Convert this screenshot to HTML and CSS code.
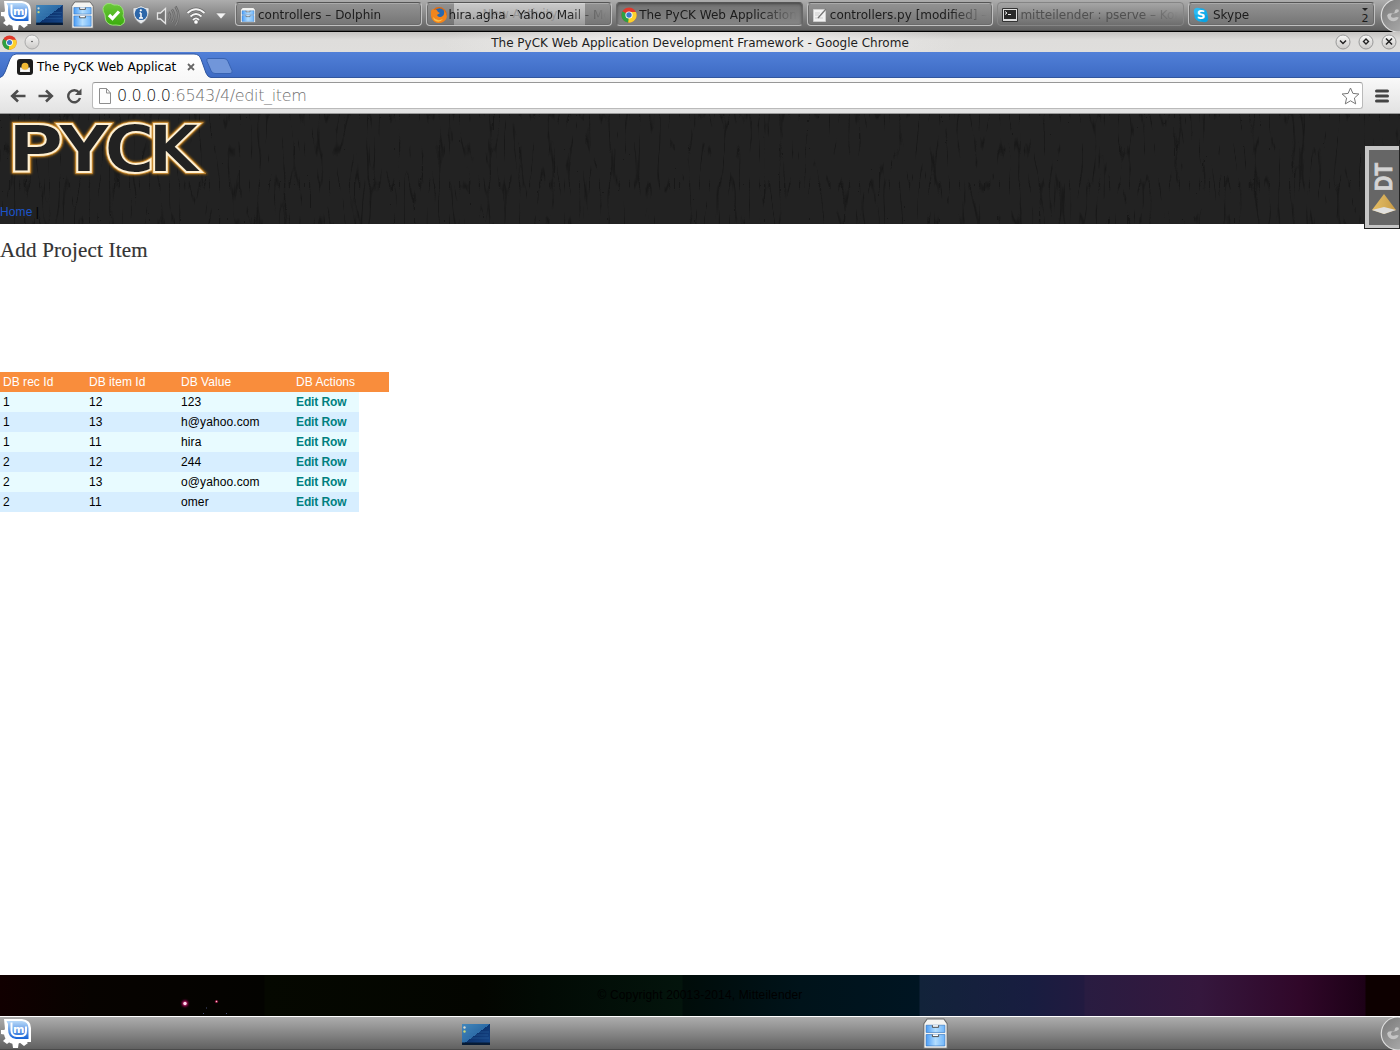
FILE: index.html
```html
<!DOCTYPE html>
<html lang="en">
<head>
<meta charset="utf-8">
<title>The PyCK Web Application Development Framework</title>
<link rel="stylesheet" href="styles.css">
</head>
<body>
<svg class="defs" width="0" height="0">
  <defs>
    <linearGradient id="blue" x1="0" y1="0" x2="0" y2="1"><stop offset="0" stop-color="#b9daf9"/><stop offset="1" stop-color="#1562d6"/></linearGradient>
    <linearGradient id="drawer" x1="0" y1="0" x2="1" y2="0"><stop offset="0" stop-color="#4a9cf6"/><stop offset=".5" stop-color="#b4defe"/><stop offset="1" stop-color="#6fb5fb"/></linearGradient>
    <linearGradient id="screen" x1="0" y1="0" x2="1" y2="1"><stop offset="0" stop-color="#4287bc"/><stop offset=".5" stop-color="#2c6ba6"/><stop offset=".5" stop-color="#0d3470"/><stop offset="1" stop-color="#17488a"/></linearGradient>
    <linearGradient id="green" x1="0" y1="0" x2="0" y2="1"><stop offset="0" stop-color="#6cc83b"/><stop offset="1" stop-color="#3aab0c"/></linearGradient>
    <linearGradient id="gold" x1="0" y1="0" x2="1" y2="0"><stop offset="0" stop-color="#e5bd63"/><stop offset=".5" stop-color="#d6ae58"/><stop offset="1" stop-color="#c99a43"/></linearGradient>
    <linearGradient id="knob" x1="0" y1="0" x2="1" y2="1"><stop offset="0" stop-color="#777"/><stop offset="1" stop-color="#b5b5b5"/></linearGradient>
    <linearGradient id="btn" x1="0" y1="0" x2="0" y2="1"><stop offset="0" stop-color="#f8f8f7"/><stop offset="1" stop-color="#cbc9c7"/></linearGradient>
    <linearGradient id="tabfill" x1="0" y1="0" x2="0" y2="1"><stop offset="0" stop-color="#fff"/><stop offset="1" stop-color="#f8f8f8"/></linearGradient>
    <filter id="glow" x="-10%" y="-20%" width="120%" height="140%"><feGaussianBlur stdDeviation="1.1"/></filter>
    <filter id="halo" x="-100%" y="-100%" width="300%" height="300%"><feGaussianBlur stdDeviation="1.1"/></filter>
    <filter id="grain" x="0" y="0" width="100%" height="100%" color-interpolation-filters="sRGB">
      <feTurbulence type="turbulence" baseFrequency=".1 .014" numOctaves="2" seed="7"/>
      <feColorMatrix values="0 0 0 0 0  0 0 0 0 0  0 0 0 0 0  -10 0 0 0 1.1"/>
    </filter>
    <symbol id="mint" viewBox="0 0 32 32">
      <g fill="#fff"><circle cx="15" cy="16" r="11"/><path d="M12 24h7l-1 7h-5zM1 13h6v5l-6-1zM3 24l5-5 4 4-5 4zM23 22l5 4-4 3-5-4zM4 2h18q9 1 9 9v14H15Q5 23 5 12z"/></g>
      <path d="M6.500 4H22q6.500 1 6.500 7v11H16Q8 21 8 12V7z" fill="url(#blue)"/>
      <path d="M11.500 5.500v8q0 5.500 5.500 5.500h4q5 0 5-5V9.500" fill="none" stroke="#fff" stroke-width="2"/>
      <text x="13" y="16" class="mint-m">m</text>
    </symbol>
    <symbol id="desktop" viewBox="0 0 28 21">
      <rect width="28" height="21" fill="url(#screen)"/><path d="M5 8h22M4 11h22M2 14h25" stroke="#3978b2" stroke-width=".6" opacity=".6"/>
      <rect y="18.500" width="28" height="2.500" fill="#071b35"/><circle cx="2.500" cy="3.500" r="1.200" fill="#d8d8d0"/><circle cx="2.500" cy="7.500" r="1.200" fill="#c9d77a"/>
    </symbol>
    <symbol id="cabinet" viewBox="0 0 24 30" preserveAspectRatio="none">
      <path d="M.800 5.500 4 1h16l3.200 4.500v23.700H.800z" fill="#f4f4f2" stroke="#696969"/>
      <path d="M3 7h18v7H3zM3 16h18v11H3z" fill="url(#drawer)" stroke="#3173bd" stroke-width=".6"/>
      <path d="M9 7v2h6V7M9 16v2h6v-2" fill="#fff" stroke="#444" stroke-width=".9"/>
    </symbol>
    <symbol id="chrome" viewBox="0 0 16 16">
      <circle cx="8" cy="8" r="7.600" fill="#e0392c"/><path d="M8 8 1.400 4.200A7.600 7.600 0 0 0 7.200 15.600L10.800 9z" fill="#2ea043"/><path d="M8 8l-.8 7.600A7.600 7.600 0 0 0 15 5H8z" fill="#fcd02c"/>
      <circle cx="8" cy="8" r="3.600" fill="#fff"/><circle cx="8" cy="8" r="2.700" fill="#3c78c8"/>
    </symbol>
    <symbol id="cashew" viewBox="0 0 20 34">
      <circle cx="18" cy="17" r="17" fill="url(#knob)" stroke="#dedede" stroke-width="1.2"/>
      <path d="M19 11q-3-1-4 1 .5 2-2 3-5-1-6 2 1 6 7 6 4-1 5-4-2-1-4 0-3 1-4-1 0-3 3-3 3 0 5-2" fill="#c4c4c4"/>
    </symbol>
  </defs>
</svg>

<header class="panel">
  <div class="tray">
    <svg class="i-mint"><use href="#mint"/></svg>
    <svg class="i-desk"><use href="#desktop"/></svg>
    <svg class="i-cab"><use href="#cabinet"/></svg>
    <svg class="i-skype" viewBox="0 0 24 24"><path d="M5 .7Q9-.3 12 2q7-1 9 5 1 4 0 6 3 4 1 7-3 4-8 2-7 1-10-4-1-3-1-6Q-2 4 5 .7z" fill="url(#green)" stroke="#9be07b"/><path d="M7 12l3.500 3.500 6.500-7" fill="none" stroke="#fff" stroke-width="3.200"/></svg>
    <svg class="i-shield" viewBox="0 0 18 20"><path d="M9 .7q4 2.300 8 2.300 1 11-8 16Q0 14 1 3q4 0 8-2.300z" fill="#e6e9ec" stroke="#888" stroke-width=".7"/><circle cx="9" cy="8.800" r="6.300" fill="#2d67a9"/><path d="M9 8v5M7.500 8H9M7 13h4" stroke="#fff" stroke-width="1.500"/><circle cx="8.800" cy="5.300" r="1.100" fill="#fff"/></svg>
    <svg class="i-sound" viewBox="0 0 26 24"><path d="M1.500 9h3l5-4.500v15l-5-4.500h-3z" fill="#777" stroke="#e4e4e4" stroke-width="1.300"/><path d="M12.500 8q3 4 0 8M16 5.500q4.500 6.500 0 13M19.500 2.500q6 9.500 0 19" fill="none" stroke="#686868" stroke-width="2.400"/><path d="M12.500 8q3 4 0 8M16 5.500q4.500 6.500 0 13M19.500 2.500q6 9.500 0 19" fill="none" stroke="#8c8c8c" stroke-width="1"/></svg>
    <svg class="i-wifi" viewBox="0 0 20 18"><g fill="none" stroke="#666" stroke-width="3.200"><path d="M1.500 6Q10-1.500 18.500 6M4.500 9.500q5.500-5 11 0M7 13q3-3 6 0"/></g><g fill="none" stroke="#f4f4f4" stroke-width="1.900"><path d="M1.500 6Q10-1.500 18.500 6M4.500 9.500q5.500-5 11 0M7 13q3-3 6 0"/></g><circle cx="10" cy="15" r="2.200" fill="#fff" stroke="#555" stroke-width=".6"/></svg>
    <svg class="i-arrow" viewBox="0 0 12 8"><path d="M.7 1h10.600L6 7z" fill="#f4f4f4" stroke="#777" stroke-width=".6"/></svg>
  </div>
  <nav class="tasks">
    <div class="task"><svg class="ti"><use href="#cabinet"/></svg><span>controllers – Dolphin</span></div>
    <div class="task fox"><svg class="ti" viewBox="0 0 16 16"><circle cx="8" cy="8" r="7.900" fill="#e26a0c"/><circle cx="8.500" cy="6.500" r="5.200" fill="#2868b0"/><path d="M1 3Q2 1 3 3q3-1 4 2l2 1-3 2q1 3 5 1.500 3-1 2-6.500 6 8-1 12-7 3-11-3-2-5-.500-9z" fill="#f2851c"/><path d="M2 10q4 5 10 2-4 5-9 1z" fill="#fbc04a"/></svg><span>hira.agha - Yahoo Mail - Mozilla</span><em>New Activity</em></div>
    <div class="task active"><svg class="ti"><use href="#chrome"/></svg><span>The PyCK Web Application D</span></div>
    <div class="task"><svg class="ti" viewBox="0 0 16 16"><path d="M1.500 2.500h12v12h-12z" fill="#f2f2f2" stroke="#ccc"/><path d="M3 6h5M3 8h4M3 11h8" stroke="#ccc"/><path d="M6 11 14 2" stroke="#777" stroke-width="1.300"/></svg><span>controllers.py [modified] – Kate</span></div>
    <div class="task dim"><svg class="ti" viewBox="0 0 16 16"><path d="M.5 1.500h15v13H.5z" fill="#ddd" stroke="#333"/><path d="M2 3h12v9H2z" fill="#292929"/><path d="M3 4.500l2 1.500-2 1.500M6 7.500h3" fill="none" stroke="#eee"/></svg><span>mitteilender : pserve – Konsole</span></div>
    <div class="task skype"><svg class="ti" viewBox="0 0 16 16"><circle cx="8" cy="8" r="6.700" fill="#12aeed"/><circle cx="4.500" cy="4.500" r="3.700" fill="#2cb9f2"/><circle cx="11.500" cy="11.500" r="3.700" fill="#0ba3e2"/><text x="8" y="12" class="sk-s">S</text></svg><span>Skype</span><b class="count"><svg width="6" height="3" viewBox="0 0 6 3"><path d="M0 0h6L3 3z" fill="#222"/></svg>2</b></div>
  </nav>
  <svg class="i-cashew"><use href="#cashew"/></svg>
</header>

<div class="titlebar">
  <div class="tl"><svg width="15" height="15"><use href="#chrome"/></svg><svg width="16" height="16" viewBox="0 0 16 16"><circle cx="8" cy="8" r="7" fill="url(#btn)" stroke="#aaa"/><circle cx="8" cy="7.500" r=".8" fill="#444"/></svg></div>
  <span class="title">The PyCK Web Application Development Framework - Google Chrome</span>
  <div class="tr">
    <svg width="16" height="16" viewBox="0 0 16 16"><circle cx="8" cy="8" r="7" fill="url(#btn)" stroke="#999"/><path d="M5 6.500l3 3 3-3" fill="none" stroke="#222" stroke-width="1.500"/></svg>
    <svg width="16" height="16" viewBox="0 0 16 16"><circle cx="8" cy="8" r="7" fill="url(#btn)" stroke="#999"/><path d="M8 5l2.500 2.500L8 10 5.500 7.500z" fill="none" stroke="#222" stroke-width="1.400"/></svg>
    <svg width="16" height="16" viewBox="0 0 16 16"><circle cx="8" cy="8" r="7" fill="url(#btn)" stroke="#999"/><path d="M5 4.500l6 6M11 4.500l-6 6" stroke="#222" stroke-width="1.500"/></svg>
  </div>
</div>

<div class="tabstrip">
  <div class="tab">
    <svg class="tabshape" viewBox="0 0 236 26"><path d="M0 25.500Q3 25 5 20l5-13q2-5 6-5h178q5 0 7 5l5 14q2 4.500 5 4.500v1H0z" fill="url(#tabfill)"/><path d="M0 25.500Q3 25 5 20l5-13q2-5 6-5h178q5 0 7 5l5 14q2 4.500 5 4.500" fill="none" stroke="#2e559f"/><path d="M208 6.500h16q3 0 4 3l4 9q1 3-2 3h-15q-3 0-4-3l-4-9q-1-3 1-3z" fill="#7196da" stroke="#3863b3"/></svg>
    <div class="tabrow">
      <svg width="16" height="16" viewBox="0 0 16 16"><rect width="16" height="16" rx="3" fill="#1d1d1d"/><path d="M3 8.500h10v4.500H3z" fill="#e5e5e5"/><circle cx="8" cy="7.200" r="3.500" fill="#f0b934"/><path d="M4 10.500q4 2 8 0v2H4z" fill="#fff"/></svg>
      <span>The PyCK Web Applicat</span>
      <svg class="close" width="8" height="8" viewBox="0 0 8 8"><path d="M1 1l6 6M7 1 1 7" stroke="#666" stroke-width="1.800"/></svg>
    </div>
  </div>
</div>

<div class="toolbar">
  <svg width="16" height="16" viewBox="0 0 16 16"><path d="M15.500 8H3M8 2.500 2.200 8 8 13.500" fill="none" stroke="#4d4d4d" stroke-width="2.600"/></svg>
  <svg width="16" height="16" viewBox="0 0 16 16"><path d="M.5 8H13M8 2.500 13.800 8 8 13.500" fill="none" stroke="#4d4d4d" stroke-width="2.600"/></svg>
  <svg width="16" height="16" viewBox="0 0 16 16"><path d="M13 4.500A6 6 0 1 0 14 10" fill="none" stroke="#4d4d4d" stroke-width="2.400"/><path d="M15.500.500V7H9z" fill="#4d4d4d"/></svg>
  <div class="omnibox">
    <svg width="12" height="16" viewBox="0 0 12 16"><path d="M.500.500h7l4 4.500v10.500H.500zM7.500.500V5h4" fill="#fdfdfd" stroke="#8d8d8d"/></svg>
    <span class="url"><i>0.0.0.0</i>:6543/4/edit_item</span>
    <svg class="star" width="19" height="18" viewBox="0 0 19 18"><path d="M9.500 1l2.400 5.400 6 .6-4.500 4 1.300 5.900-5.200-3.100-5.200 3.100L5.600 11 1.100 7l6-.6z" fill="#fff" stroke="#777" stroke-linejoin="round"/></svg>
  </div>
  <svg class="menu" width="14" height="14" viewBox="0 0 14 14"><path d="M1.500 2h11M1.500 7h11M1.500 12h11" stroke="#444" stroke-width="3" stroke-linecap="round"/></svg>
</div>

<section class="banner">
  <svg class="bark"><rect width="1400" height="110" fill="#222"/><rect width="1400" height="110" filter="url(#grain)" opacity=".27"/></svg>
  <svg class="logo" width="210" height="70" viewBox="0 0 210 70">
    <defs>
      <g id="word" class="logo-text">
        <text x="7" y="57.500" textLength="57" lengthAdjust="spacingAndGlyphs">P</text>
        <text x="58" y="57.500" textLength="52" lengthAdjust="spacingAndGlyphs">Y</text>
        <text x="104" y="57.500" textLength="51" lengthAdjust="spacingAndGlyphs">C</text>
        <text x="148" y="57.500" textLength="52" lengthAdjust="spacingAndGlyphs">K</text>
      </g>
    </defs>
    <use href="#word" stroke="#b87416" stroke-width="4.500" filter="url(#glow)"/>
    <use href="#word" stroke="#cf943c" stroke-width="3.400"/>
    <use href="#word" stroke="#fff0d2" stroke-width="1.800"/>
  </svg>
  <div class="crumb"><a>Home</a> |</div>
  <svg class="dt" width="36" height="84" viewBox="0 0 36 84"><rect x=".5" y=".5" width="35" height="83" fill="#c6c6c6" stroke="#222"/><path d="M5 5h30v75H5z" fill="#666"/><text transform="translate(28 46) rotate(-90)" textLength="28" lengthAdjust="spacingAndGlyphs" class="dt-t">DT</text><path d="M20 49 32 65 20 69 8 65z" fill="url(#gold)"/><path d="M8 65l12-3 12 3-12 4z" fill="#e0e0df"/></svg>
</section>

<main>
  <h1>Add Project Item</h1>
  <table>
    <thead><tr><th>DB rec Id</th><th>DB item Id</th><th>DB Value</th><th>DB Actions</th><th></th></tr></thead>
    <tbody>
      <tr><td>1</td><td>12</td><td>123</td><td><a>Edit Row</a></td></tr>
      <tr><td>1</td><td>13</td><td>h@yahoo.com</td><td><a>Edit Row</a></td></tr>
      <tr><td>1</td><td>11</td><td>hira</td><td><a>Edit Row</a></td></tr>
      <tr><td>2</td><td>12</td><td>244</td><td><a>Edit Row</a></td></tr>
      <tr><td>2</td><td>13</td><td>o@yahoo.com</td><td><a>Edit Row</a></td></tr>
      <tr><td>2</td><td>11</td><td>omer</td><td><a>Edit Row</a></td></tr>
    </tbody>
  </table>
</main>

<footer>
  <svg class="stars" width="300" height="41"><circle cx="185" cy="28.500" r="3" fill="#c00b65" filter="url(#halo)"/><circle cx="185" cy="28.500" r="1.700" fill="#ffd9ee"/><circle cx="216.500" cy="26.500" r="1.600" fill="#8d123c"/><circle cx="216.500" cy="26.500" r=".7" fill="#ffc7d0"/><path d="M206 33h1M203 38.500h1M226 38.500h1" stroke="#444f77"/></svg>
  <span>© Copyright 20013-2014, Mitteilender</span>
</footer>

<div class="panel dock">
  <svg class="i-mint"><use href="#mint"/></svg>
  <svg class="i-desk"><use href="#desktop"/></svg>
  <svg class="i-cab"><use href="#cabinet"/></svg>
  <svg class="i-cashew"><use href="#cashew"/></svg>
</div>
</body>
</html>
```
FILE: styles.css
```css
* { box-sizing: border-box; }
body { margin: 0; width: 1400px; height: 1050px; overflow: hidden; display: flex; flex-direction: column; background: #fff; font-family: "Liberation Sans", Arial, sans-serif; font-size: 12px; color: #000; }
.defs { position: absolute; }
svg { display: block; flex: none; }
.panel { height: 32px; flex: none; display: flex; background: linear-gradient(#adadad, #5e5e5e); border-bottom: 1px solid #000; box-shadow: inset 0 -1px #4a4a4a; font-family: "DejaVu Sans", sans-serif; }
.tray { width: 235px; display: flex; align-items: center; }
.i-mint { width: 32px; height: 32px; margin-top: -2px; }
.i-desk { width: 27px; height: 20px; margin: -1px 0 0 4px; }
.i-cab { width: 23px; height: 28px; margin: -2px 0 0 8px; }
.i-skype { width: 24px; height: 24px; margin: -1px 0 0 8px; }
.i-shield { width: 18px; height: 20px; margin: -2px 0 0 6px; }
.i-sound { width: 26px; height: 24px; margin-left: 6px; }
.i-wifi { width: 20px; height: 18px; margin-left: 4px; }
.i-arrow { width: 12px; height: 8px; margin-left: 9px; }
.i-cashew { width: 20px; height: 33px; margin: -1px 0 0 auto; }
.mint-m { font: bold 11px "DejaVu Sans", sans-serif; fill: #fff; }
.sk-s { font: bold 12px "DejaVu Sans", sans-serif; fill: #fff; text-anchor: middle; }
.tasks { display: flex; gap: 4px; padding: 2px 0 5px; }
.task { width: 186.600px; display: flex; align-items: center; gap: 2px; padding: 1px 5px 0 4px; position: relative; overflow: hidden; white-space: nowrap; color: #1c1c1c; border: 1px solid #c0c0c0; border-top-color: #555; border-radius: 4px; background: linear-gradient(#939393, #757575); box-shadow: inset 0 1px #aaa, inset 0 0 0 1px #6b6b6b; }
.task span { flex: 1; overflow: hidden; -webkit-mask-image: linear-gradient(90deg, #000 76%, transparent 100%); mask-image: linear-gradient(90deg, #000 76%, transparent 100%); }
.ti { width: 16px; height: 16px; }
.fox em { position: absolute; left: 27px; top: -3px; width: 131px; height: 27px; padding-left: 29px; line-height: 28px; font-style: normal; color: rgba(120,120,120,.5); background: linear-gradient(rgba(255,255,255,.55), rgba(255,255,255,.25)); border-radius: 3px; }
.fox span { z-index: 1; }
.active { background: linear-gradient(#737373, #858585); border-color: #555 #666 #bbb; box-shadow: inset 0 1px 3px #444; }
.dim { color: #505050; border-color: #858585; background: none; box-shadow: none; }
.skype { gap: 4px; }
.count { display: flex; flex-direction: column; align-items: center; gap: 2px; margin-top: 2px; font: 11px/11px "DejaVu Sans", sans-serif; }
.titlebar { height: 20px; flex: none; display: grid; grid-template-columns: 60px 1fr 60px; align-items: center; padding: 0 3px; background: linear-gradient(#c5c3c1, #dedddb 40%, #dfdedc); font-family: "DejaVu Sans", sans-serif; color: #1e1e1e; }
.tl { display: flex; align-items: center; gap: 7px; margin: -1px 0 0 -1px; }
.tr { display: flex; gap: 7px; justify-content: flex-end; margin: -1px 0 0; }
.title { text-align: center; line-height: 20px; padding-top: 1px; background: radial-gradient(ellipse 260px 30px, #f4f3f2, transparent); }
.tabstrip { height: 26px; flex: none; background: linear-gradient(#5180d8, #3e6bc4); border-bottom: 1px solid #31569e; }
.tab { width: 236px; height: 26px; display: grid; }
.tab > * { grid-area: 1 / 1; }
.tabshape { width: 236px; height: 26px; }
.tabrow { display: flex; align-items: center; padding: 4px 0 0 17px; font: 12px "DejaVu Sans", sans-serif; z-index: 1; gap: 4px; }
.close { margin-left: 7px; }
.toolbar { height: 36px; flex: none; display: flex; align-items: center; gap: 12px; padding: 0 11px 0 9.500px; background: linear-gradient(#f9f9f9, #e2e2e2); border-bottom: 1px solid #999; }
.omnibox { width: 1272px; height: 27px; margin: 0 0 0 -1.500px; display: flex; align-items: center; padding: 0 2px 0 6px; gap: 6px; background: #fff; border: 1px solid #bababa; border-top-color: #979797; border-radius: 3px; }
.url { font: 200 16px "DejaVu Sans", sans-serif; letter-spacing: -.350px; color: #707070; }
.url i { font-style: normal; color: #111; }
.star { margin-left: auto; }
.banner { height: 110px; flex: none; position: relative; display: flex; flex-direction: column; }
.bark { position: absolute; left: 0; top: 0; width: 1400px; height: 110px; }
.logo { position: relative; }
.logo-text { font: bold 65px "DejaVu Sans", sans-serif; fill: #222; stroke-linejoin: miter; }
.crumb { position: relative; margin-top: 20px; line-height: 16px; letter-spacing: .1px; }
.crumb a { color: #1c55cb; }
.dt { position: absolute; left: 1364px; top: 31px; z-index: 2; }
.dt-t { font: bold 24px "Liberation Sans", sans-serif; fill: #d4d4d4; stroke: #d4d4d4; stroke-width: .8; }
main { height: 751px; flex: none; padding-top: 10px; }
h1 { margin: 0 0 106px; font: 21px/32px "Liberation Serif", serif; color: #333; letter-spacing: .2px; -webkit-text-stroke: .2px #333; }
table { border-collapse: collapse; width: 389px; table-layout: fixed; }
th, td { height: 20px; padding: 0 3px; text-align: left; line-height: 20px; white-space: nowrap; letter-spacing: .1px; }
th { background: #f98d3c; color: #fff; font-weight: normal; letter-spacing: .04px; }
th:nth-child(1) { width: 86px; }
th:nth-child(2) { width: 92px; }
th:nth-child(3) { width: 115px; }
th:nth-child(4) { width: 66px; }
td { background: #e8fbff; }
tr:nth-child(even) td { background: #d7eeff; }
td a { color: #008080; font-weight: bold; letter-spacing: -.120px; }
footer { height: 41px; flex: none; position: relative; text-align: center; line-height: 40px; letter-spacing: .150px; background: linear-gradient(90deg, #110000 0, #070300 90px, #030300 264px, #050800 265px, #030500 480px, #020a04 540px, #03140c 682px, #000c09 683px, #00131a 800px, #001522 919px, #12233a 920px, #181d40 1030px, #221a40 1084px, #291c41 1085px, #35173d 1200px, #300729 1300px, #1d0117 1365px, #0d0000 1366px); }
.stars { position: absolute; left: 0; top: 0; }
.dock { height: 34px; align-items: center; border-top: 1px solid #fff; border-bottom: 0; }
.dock .i-desk { width: 28px; height: 21px; margin-left: 430px; margin-top: 2px; }
.dock .i-cab { width: 25px; height: 31px; margin: 0 0 0 433px; }
.dock .i-cashew { margin-top: -1px; }
```
